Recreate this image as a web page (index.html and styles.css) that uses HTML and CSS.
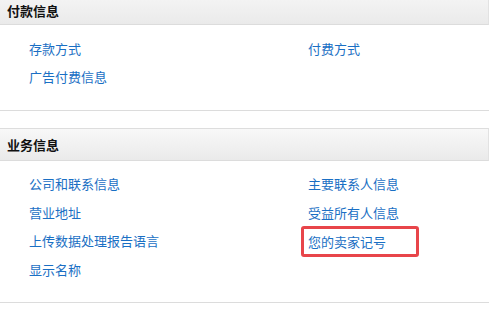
FILE: index.html
```html
<!DOCTYPE html>
<html lang="zh-CN">
<head>
<meta charset="utf-8">
<title>设置</title>
<link rel="stylesheet" href="styles.css">
</head>
<body>
<div class="page">
  <section class="section">
    <h2 class="section-head section-head--first">付款信息</h2>
    <div class="section-body">
      <a class="link" href="#">存款方式</a>
      <a class="link" href="#">付费方式</a>
      <a class="link" href="#">广告付费信息</a>
    </div>
  </section>
  <section class="section">
    <h2 class="section-head">业务信息</h2>
    <div class="section-body">
      <a class="link" href="#">公司和联系信息</a>
      <a class="link" href="#">主要联系人信息</a>
      <a class="link" href="#">营业地址</a>
      <a class="link" href="#">受益所有人信息</a>
      <a class="link" href="#">上传数据处理报告语言</a>
      <span class="cell"><a class="link highlight" href="#">您的卖家记号</a></span>
      <a class="link" href="#">显示名称</a>
    </div>
  </section>
</div>
</body>
</html>
```

FILE: styles.css
```css
html, body {
  margin: 0;
  padding: 0;
  background: #ffffff;
}
body {
  font-family: "Noto Sans CJK SC", "Noto Sans", "Liberation Sans", sans-serif;
  font-size: 13px;
  color: #111;
  overflow: hidden;
}
.section {
  border-bottom: 1px solid #dcdcdc;
  margin-bottom: 17px;
}
.section-head {
  margin: 0;
  height: 31px;
  line-height: 31px;
  padding: 0 7px;
  font-size: 13px;
  font-weight: bold;
  color: #111;
  background: linear-gradient(#f8f8f8, #eaeaea);
  border-top: 1px solid #dddddd;
  border-bottom: 1px solid #dcdcdc;
  border-right: 1px solid #e2e2e2;
}
.section-head--first {
  height: 24px;
  line-height: 22px;
  border-top: 0;
  background: linear-gradient(#f3f3f3, #eaeaea);
}
.section-body {
  display: grid;
  grid-template-columns: 279px 1fr;
  grid-auto-rows: 28.4px;
  align-items: center;
  padding: 9.5px 0 18.5px 29px;
}
.link {
  color: #1a6fc4;
  text-decoration: none;
  line-height: 18px;
  justify-self: start;
}
.cell {
  position: relative;
  justify-self: start;
}
.highlight {
  position: relative;
}
.highlight::after {
  content: "";
  position: absolute;
  left: -7px;
  right: -33px;
  top: -6px;
  bottom: -6px;
  border: 3px solid #e8454a;
  border-radius: 3px;
}
```
